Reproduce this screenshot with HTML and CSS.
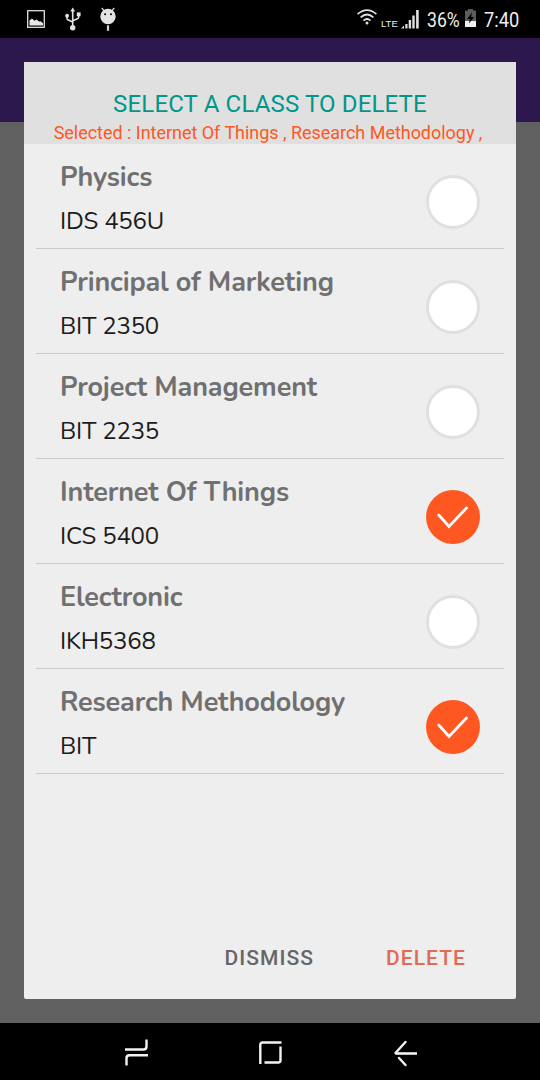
FILE: index.html
```html
<!DOCTYPE html>
<html lang="en">
<head>
    <meta charset="UTF-8">
    <meta name="viewport" content="width=device-width, initial-scale=1.0">
    <title>Select a class to delete</title>
    <link rel="stylesheet" href="styles.css">
</head>
<body>

<div class="statusbar">
    <svg class="icon-image" width="18" height="18" viewBox="0 0 18 18">
        <rect x="0.7" y="0.7" width="16.6" height="16.6" fill="none" stroke="#e0e0e0" stroke-width="1.3"/>
        <path d="M2.5 15.5V10.5l2.5-2 2.5 2.2 2-1.2 2.5 2 1.5-.3 2.5 2v2.3z" fill="#e8e8e8"/>
    </svg>
    <svg class="icon-usb" width="16" height="24" viewBox="0 0 16 24">
        <g fill="none" stroke="#e4e4e4" stroke-width="1.6">
            <path d="M7.7 3v17"/>
            <path d="M2 8v3.2q0 1.3 1.3 1.9l4.4 2"/>
            <path d="M13.7 7v2.8q0 1.3-1.3 1.9l-4.7 2"/>
        </g>
        <path d="M7.7 0.5l2.4 4H5.3z" fill="#e4e4e4"/>
        <circle cx="2.1" cy="8.7" r="1.9" fill="#e4e4e4"/>
        <rect x="11.8" y="5.4" width="3.8" height="3.8" fill="#e4e4e4"/>
        <circle cx="7.7" cy="20.7" r="2.7" fill="#e4e4e4"/>
    </svg>
    <svg class="icon-droid" width="16" height="24" viewBox="0 0 16 24">
        <path d="M1.7 1l3 3.3M14.3 1l-3 3.3" stroke="#e4e4e4" stroke-width="1.2"/>
        <circle cx="8" cy="9.5" r="7.7" fill="#e4e4e4"/>
        <circle cx="5.1" cy="7.3" r="1" fill="#000"/>
        <circle cx="11" cy="7.3" r="1" fill="#000"/>
        <path d="M8 18.3v5.5" stroke="#d4d4d4" stroke-width="2.2"/>
    </svg>
    <div class="status-right">
        <svg class="icon-wifi" width="20" height="16" viewBox="0 0 20 16">
            <g fill="none" stroke="#e0e0e0" stroke-width="1.8">
                <path d="M.6 5.1Q10-2.9 19.4 5.1"/>
                <path d="M3.6 8.4Q10 2.7 16.4 8.4"/>
                <path d="M6.5 11.6Q10 8.4 13.5 11.6"/>
            </g>
            <circle cx="10" cy="14" r="1.5" fill="#e0e0e0"/>
        </svg>
        <span class="lte">LTE</span>
        <svg class="icon-signal" width="18" height="20" viewBox="0 0 18 20" fill="#e0e0e0">
            <path d="M0 19.5l3-3v3zM4.3 15h2.2v4.5H4.3zM7.7 11h2.4v8.5H7.7zM11.3 6.5h2.4v13h-2.4zM15.1 1h2.6v18.5h-2.6z"/>
        </svg>
        <span class="battery">36%</span>
        <svg class="icon-battery" width="11" height="18" viewBox="0 0 11 18">
            <path d="M3 0h5v1.5h3V12H0V1.5h3z" fill="#5c5c5c"/>
            <path d="M0 12h11v6H0z" fill="#f0f0f0"/>
            <path d="M7 3.5L2 10h2.8L4 14.5 9 8H6.2z" fill="#000"/>
        </svg>
        <span class="clock">7:40</span>
    </div>
</div>

<div class="screen">
    <div class="dialog">
        <div class="dialog-header">
            <h1>SELECT A CLASS TO DELETE</h1>
            <p>Selected : Internet Of Things , Research Methodology ,</p>
        </div>
        <ul class="class-list">
            <li>
                <div><h2>Physics</h2><p>IDS 456U</p></div>
                <span class="check"></span>
            </li>
            <li>
                <div><h2>Principal of Marketing</h2><p>BIT 2350</p></div>
                <span class="check"></span>
            </li>
            <li>
                <div><h2>Project Management</h2><p>BIT 2235</p></div>
                <span class="check"></span>
            </li>
            <li>
                <div><h2>Internet Of Things</h2><p>ICS 5400</p></div>
                <span class="check checked">
                    <svg width="54" height="54" viewBox="0 0 54 54"><path d="M12.8 25L23 36.5 40.5 18" fill="none" stroke="#fff" stroke-width="2.8" stroke-linecap="round"/></svg>
                </span>
            </li>
            <li>
                <div><h2>Electronic</h2><p>IKH5368</p></div>
                <span class="check"></span>
            </li>
            <li>
                <div><h2>Research Methodology</h2><p>BIT</p></div>
                <span class="check checked">
                    <svg width="54" height="54" viewBox="0 0 54 54"><path d="M12.8 25L23 36.5 40.5 18" fill="none" stroke="#fff" stroke-width="2.8" stroke-linecap="round"/></svg>
                </span>
            </li>
        </ul>
        <div class="actions">
            <button class="dismiss">DISMISS</button>
            <button class="delete">DELETE</button>
        </div>
    </div>
</div>

<div class="navbar">
    <svg width="26" height="28" viewBox="0 0 26 28">
        <path d="M3 10.5H21.5Q24.5 10.5 24.5 7.5V.5M26 16.2H7.5Q4.5 16.2 4.5 19.2V26.5" fill="none" stroke="#f2f2f2" stroke-width="2.4"/>
    </svg>
    <svg width="26" height="28" viewBox="0 0 26 28">
        <path d="M24.5 3.5H5.5Q3.3 3.5 3.3 5.7V25M7.5 23.5H21.3Q23.5 23.5 23.5 21.3V7.5" fill="none" stroke="#f2f2f2" stroke-width="2.4"/>
    </svg>
    <svg width="26" height="28" viewBox="0 0 26 28">
        <path d="M25 14.5H3.5" fill="none" stroke="#f2f2f2" stroke-width="2.6"/>
        <path d="M3.5 14L13.5 3M7 19l6.5 7" fill="none" stroke="#f2f2f2" stroke-width="2.4" stroke-linecap="round"/>
    </svg>
</div>

</body>
</html>
```

FILE: styles.css
```css
* { box-sizing: border-box; }
body { margin: 0; width: 540px; height: 1080px; display: flex; flex-direction: column; overflow: hidden; background: #000; font-family: Roboto, sans-serif; }
h1, h2, p, ul { margin: 0; padding: 0; font-weight: normal; }
svg { display: block; flex: none; }

.statusbar { height: 38px; display: flex; align-items: flex-start; padding: 0 21px 0 27px; background: #000; color: #f0f0f0; white-space: nowrap; }
.icon-image { margin-top: 10px; }
.icon-usb { margin: 7px 0 0 20px; }
.icon-droid { margin: 7px 0 0 19px; }
.status-right { display: flex; margin-left: auto; }
.icon-wifi { margin-top: 9px; }
.lte { width: 18px; margin: 18px 0 0 4px; font-family: "Liberation Sans", sans-serif; font-size: 9.5px; line-height: 12px; }
.icon-signal { margin: 9px 0 0 2px; }
.battery { width: 33px; margin: 8px 0 0 8px; font-size: 21px; line-height: 24px; transform: scaleX(0.84); transform-origin: left; }
.icon-battery { margin: 9px 0 0 5px; }
.clock { width: 35px; margin: 8px 0 0 8px; font-size: 21px; line-height: 24px; transform: scaleX(0.87); transform-origin: left; }

.screen { height: 985px; padding: 24px 24px 0; background: linear-gradient(#2c184c 84px, #606060 84px); }
.dialog { height: 937px; display: flex; flex-direction: column; background: #eee; border-radius: 0 0 2px 2px; overflow: hidden; }
.dialog-header { height: 82px; padding-top: 27px; background: #e0e0e0; text-align: center; white-space: nowrap; }
.dialog-header h1 { font-size: 24px; line-height: 30px; letter-spacing: 0.15px; color: #009688; }
.dialog-header p { padding-right: 4px; font-size: 18px; line-height: 27px; letter-spacing: -0.03px; color: #ff5722; }

.class-list { flex: 1; margin: 0 12px; list-style: none; }
.class-list li { height: 105px; display: flex; justify-content: space-between; padding: 0 24px; border-bottom: 1px solid #ccc; font-family: Nunito, Lato, sans-serif; }
.class-list h2 { margin-top: 17px; font-size: 27px; line-height: 34px; font-weight: bold; letter-spacing: -0.14px; color: #707070; white-space: nowrap; }
.class-list p { margin-top: 10px; font-size: 24px; line-height: 32px; letter-spacing: -0.2px; color: #1c1c1c; white-space: nowrap; }
.check { width: 54px; height: 54px; margin-top: 31px; border: 3px solid #e0e0e0; border-radius: 50%; background: #fff; }
.checked { border: 0; background: #ff5722; }

.actions { display: flex; justify-content: flex-end; height: 82px; padding-right: 26px; }
.actions button { height: 48px; margin-top: 17px; padding: 0 24px; border: 0; background: none; font-family: Roboto, sans-serif; font-size: 21px; font-weight: 500; letter-spacing: 1.05px; color: #666; }
.actions .dismiss { margin-right: 24px; }
.actions .delete { color: #e06c55; }

.navbar { height: 57px; display: flex; justify-content: center; align-items: center; gap: 109px; background: #000; padding-top: 2px; }
```
